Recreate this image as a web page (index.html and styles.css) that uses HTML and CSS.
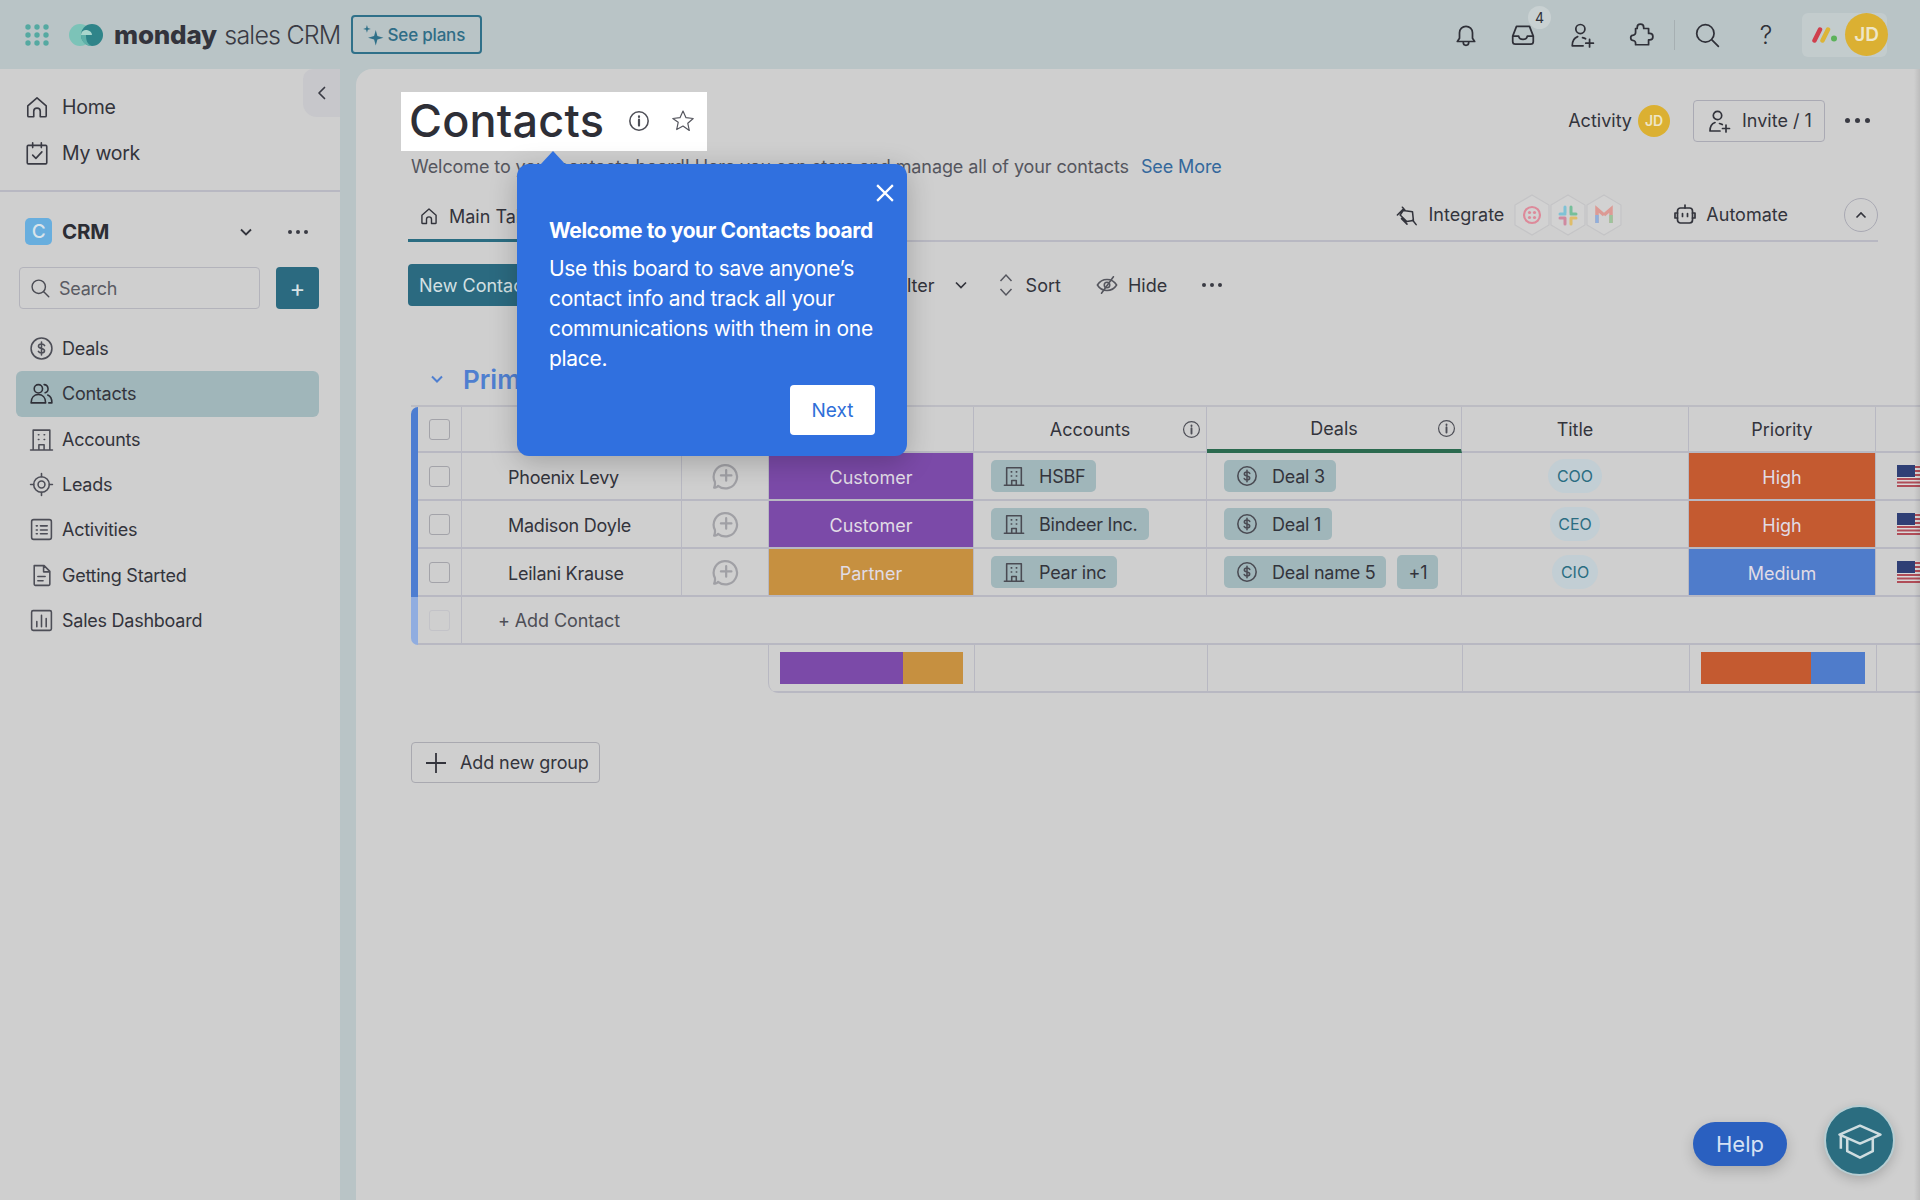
FILE: index.html
```html
<!DOCTYPE html>
<html lang="en">
<head>
<meta charset="utf-8">
<title>Contacts - monday sales CRM</title>
<link rel="stylesheet" href="styles.css">
</head>
<body>
<svg class="sprite" width="0" height="0" aria-hidden="true">
  <symbol id="i-home" viewBox="0 0 24 24"><path d="M3.500 11 12 3.500l8.500 7.500V20a1 1 0 0 1-1 1H15v-5a3 3 0 0 0-6 0v5H4.500a1 1 0 0 1-1-1z"/></symbol>
  <symbol id="i-cal" viewBox="0 0 24 24"><rect x="3" y="5" width="18" height="17" rx="1"/><path d="M8 2.500V7M16 2.500V7M8 14l3 3 5.500-6"/></symbol>
  <symbol id="i-deal" viewBox="0 0 24 24"><circle cx="12" cy="12" r="10"/><path d="M15 9.200c-.5-1-1.600-1.500-3-1.500-1.600 0-2.900.8-2.900 2.100s1.300 1.800 2.900 2.200 2.900.9 2.900 2.200-1.300 2.100-2.900 2.100c-1.400 0-2.500-.5-3-1.500M12 5.800v12.400"/></symbol>
  <symbol id="i-people" viewBox="0 0 24 24"><circle cx="9" cy="7.500" r="4"/><path d="M2 21c0-5 3-8 7-8s7 3 7 8z"/><path d="M14.500 3.500a4 4 0 0 1 1 7.800M18 13.500c2.500 1 4 3.500 4 7.500h-3"/></symbol>
  <symbol id="i-building" viewBox="0 0 24 24"><path d="M1.500 22h21M4 22V3h16v19M9.500 22v-5h5v5M9 7.500h.5M14.500 7.500h.5M9 12h.5M14.500 12h.5"/></symbol>
  <symbol id="i-target" viewBox="0 0 24 24"><circle cx="12" cy="12" r="7.500"/><circle cx="12" cy="12" r="3.300"/><path d="M12 1.500v3M12 19.500v3M1.500 12h3M19.500 12h3"/></symbol>
  <symbol id="i-list" viewBox="0 0 24 24"><rect x="2.500" y="2.500" width="19" height="19" rx="2"/><path d="M7 8.500h1M7 12.500h1M7 16h1M11 8.500h6.500M11 12.500h6.500M11 16h6.500"/></symbol>
  <symbol id="i-doc" viewBox="0 0 24 24"><path d="M5 2.500h9.500L20 8v12.500a1 1 0 0 1-1 1H6a1 1 0 0 1-1-1zM14 3v5.500h5.500M8.500 13h7M8.500 17h5"/></symbol>
  <symbol id="i-chart" viewBox="0 0 24 24"><rect x="2.500" y="2.500" width="19" height="19" rx="1.500"/><path d="M7.500 18v-5M12 18V7M16.500 18v-8"/></symbol>
  <symbol id="i-person" viewBox="0 0 24 24"><circle cx="10.500" cy="6.500" r="4.200"/><path d="M3 22c0-5 2-7.500 5-8.500M3 22h10M12.500 14.500c1 .2 2 .5 2.800 1M15.500 19.500h7M19 16v7"/></symbol>
  <symbol id="i-bell" viewBox="0 0 24 24"><path d="M4 18h16l-2-3v-5a6 6 0 0 0-12 0v5zM9.500 19a2.500 2.500 0 0 0 5 0"/></symbol>
  <symbol id="i-inbox" viewBox="0 0 24 24"><path d="M2.500 13 6 4h12l3.500 9v5a2.500 2.500 0 0 1-2.500 2.500H5A2.500 2.500 0 0 1 2.500 18zM2.500 13H8c.3 2 1.800 3 4 3s3.700-1 4-3h5.500"/></symbol>
  <symbol id="i-puzzle" viewBox="0 0 24 24"><path d="M8.500 6V5a3 3 0 0 1 6 0v1H19v4.500h1a3 3 0 0 1 0 6h-1V21H7v-1.500a2.500 2.500 0 0 0-2-2.400 2.500 2.500 0 0 1 0-5 2.500 2.500 0 0 0 2-2.400V6z"/></symbol>
  <symbol id="i-search" viewBox="0 0 24 24"><circle cx="10.500" cy="10.500" r="8"/><path d="m16.500 16.500 6 6"/></symbol>
  <symbol id="i-info" viewBox="0 0 24 24"><circle cx="12" cy="12" r="10"/><path d="M12 10.500V17M12 7v.5" stroke-width="2.400"/></symbol>
  <symbol id="i-star" viewBox="0 0 24 24"><path d="m12 2 3 6.700 7.200.8-5.400 4.800 1.500 7.200L12 17l-6.300 3.500 1.500-7.200L1.800 9.500 9 8.700z"/></symbol>
  <symbol id="i-plug" viewBox="0 0 24 24"><path d="m1.500 12 6-6M12 22 6 16M8 7l10 1.500 1 9.500-7.500 1-7-7zM7 3.500 10 7M18 17.500l4 5"/></symbol>
  <symbol id="i-robot" viewBox="0 0 24 24"><rect x="4.500" y="5" width="15" height="15" rx="3"/><path d="M12 5V2M4.500 10H2v5h2.500M19.500 10H22v5h-2.500M9.500 10.500v3M14.500 10.500v3"/></symbol>
  <symbol id="i-eye" viewBox="0 0 24 24"><path d="M1.500 12c2.500-4 6-6 10.500-6s8 2 10.500 6c-2.500 4-6 6-10.500 6s-8-2-10.500-6z"/><circle cx="12" cy="12" r="3"/><path d="M6 21 19 3"/></symbol>
  <symbol id="i-chat" viewBox="0 0 24 24"><path d="M3.500 22c1.200-.2 2-.8 2.500-1.600A10 10 0 1 0 3.300 17c.4 2-.1 3.800-.6 5z"/><path d="M13 7v9M8.500 11.500h9"/></symbol>
  <symbol id="i-cap" viewBox="0 0 36 28"><path d="M18 2 34 9 18 16 2 9zM8 12v10l10 5 10-5V12M3 9v11"/></symbol>
  <symbol id="i-flag" viewBox="0 0 24 22"><rect width="24" height="22" fill="#d8d8d8"/><path d="M0 14h24M0 17.500h24M0 21h24M18 2h6M18 6h6M18 10h6" stroke="#b04d58" stroke-width="1.800"/><rect width="18" height="12" fill="#2f3f75"/></symbol>
</svg>

<header class="topbar">
  <svg class="grid-icon" viewBox="0 0 24 22"><g fill="#55a9a1"><circle cx="3" cy="3" r="2.700"/><circle cx="12" cy="3" r="2.700"/><circle cx="21" cy="3" r="2.700"/><circle cx="3" cy="11" r="2.700"/><circle cx="12" cy="11" r="2.700"/><circle cx="21" cy="11" r="2.700"/><circle cx="3" cy="19" r="2.700"/><circle cx="12" cy="19" r="2.700"/><circle cx="21" cy="19" r="2.700"/></g></svg>
  <svg class="logo-mark" viewBox="0 0 34 22">
    <circle cx="11" cy="11" r="11" fill="#7cc3b8"/>
    <circle cx="23" cy="11" r="11" fill="#2f8489"/>
    <path d="M12 11a5 5 0 0 1 6-5c3 .5 5 2.500 5 5z" fill="#a9d6cd"/>
    <path d="M12 11c0 6 4 11 11 11-5-2-6-6-6-11z" fill="#5fb0a8"/>
  </svg>
  <div class="brand"><span class="brand-bold">monday</span> <span class="brand-light">sales CRM</span></div>
  <button class="see-plans">
    <svg class="spark" viewBox="0 0 20 20"><path d="M12.500 5.500 14 11l5.500 1.500L14 14l-1.500 5.500L11 14l-5.500-1.500L11 11zM4.500 1l.8 2.700L8 4.500l-2.700.8L4.500 8l-.8-2.700L1 4.500l2.700-.8z"/></svg>
    See plans
  </button>
  <div class="top-icons">
    <svg class="ic top-svg top-ic"><use href="#i-bell"/></svg>
    <div class="inbox-wrap">
      <svg class="ic top-svg"><use href="#i-inbox"/></svg>
      <span class="badge">4</span>
    </div>
    <svg class="ic top-svg top-ic"><use href="#i-person"/></svg>
    <svg class="ic top-svg top-ic"><use href="#i-puzzle"/></svg>
    <span class="top-divider"></span>
    <svg class="ic top-svg top-ic"><use href="#i-search"/></svg>
    <span class="help-q">?</span>
    <div class="account">
      <svg class="m-logo" viewBox="0 0 26 16"><g stroke-width="4.500" stroke-linecap="round"><path d="M2.500 13.500 8 2.500" stroke="#cf3f4d"/><path d="M10.500 13.500 16 2.500" stroke="#dcb437"/></g><circle cx="22" cy="11.500" r="3" fill="#5cb25a"/></svg>
      <span class="avatar avatar-lg">JD</span>
    </div>
  </div>
</header>

<div class="shell">
  <aside class="sidebar">
    <button class="collapse" aria-label="Collapse"><svg class="ic ic-14" viewBox="0 0 14 14"><path d="M9.500 1.500 4 7l5.500 5.500"/></svg></button>
    <nav class="top-nav">
      <a class="top-link"><svg class="ic"><use href="#i-home"/></svg>Home</a>
      <a class="top-link"><svg class="ic"><use href="#i-cal"/></svg>My work</a>
    </nav>
    <div class="ws-row">
      <span class="ws-icon">C</span>
      <span class="ws-name">CRM</span>
      <svg class="ws-chev" viewBox="0 0 14 14"><path d="m2 4.500 5 5 5-5"/></svg>
      <span class="dots dots-ws"><i></i><i></i><i></i></span>
    </div>
    <div class="search-row">
      <div class="search-box"><svg class="ic ic-18"><use href="#i-search"/></svg>Search</div>
      <button class="add-btn">+</button>
    </div>
    <nav class="board-nav">
      <a class="board-link"><svg class="ic"><use href="#i-deal"/></svg>Deals</a>
      <a class="board-link active"><svg class="ic"><use href="#i-people"/></svg>Contacts</a>
      <a class="board-link"><svg class="ic"><use href="#i-building"/></svg>Accounts</a>
      <a class="board-link"><svg class="ic"><use href="#i-target"/></svg>Leads</a>
      <a class="board-link"><svg class="ic"><use href="#i-list"/></svg>Activities</a>
      <a class="board-link"><svg class="ic"><use href="#i-doc"/></svg>Getting Started</a>
      <a class="board-link"><svg class="ic"><use href="#i-chart"/></svg>Sales Dashboard</a>
    </nav>
  </aside>

  <main class="main">
    <div class="board-head">
      <div class="title-box">
        <h1 class="title">Contacts</h1>
        <svg class="ic ic-20 title-info"><use href="#i-info"/></svg>
        <svg class="ic ic-22 title-star"><use href="#i-star"/></svg>
      </div>
      <div class="head-right">
        <span class="activity">Activity</span>
        <span class="avatar avatar-sm">JD</span>
        <button class="invite"><svg class="ic ic-24"><use href="#i-person"/></svg>Invite / 1</button>
        <span class="dots dots-head"><i></i><i></i><i></i></span>
      </div>
    </div>
    <p class="subtitle">Welcome to your contacts board! Here you can store and manage all of your contacts <a class="see-more">See More</a></p>

    <div class="tabs">
      <div class="tab-active"><svg class="ic ic-20"><use href="#i-home"/></svg>Main Table</div>
      <div class="tabs-right">
        <svg class="ic ic-22 integ-ic"><use href="#i-plug"/></svg>
        <span class="tab-label">Integrate</span>
        <svg class="hexes" viewBox="0 0 108 42">
          <g fill="#d2d2d2" stroke="#c4c4c6" stroke-width="1.200">
            <path d="M18 1 35 11v20L18 41 1 31V11z"/>
            <path d="M54 1 71 11v20L54 41 37 31V11z"/>
            <path d="M90 1l17 10v20L90 41 73 31V11z"/>
          </g>
          <circle cx="18" cy="21" r="8" fill="none" stroke="#dd8a9a" stroke-width="2.200"/>
          <g fill="#dd8a9a"><circle cx="15.500" cy="18.500" r="1.600"/><circle cx="20.500" cy="18.500" r="1.600"/><circle cx="15.500" cy="23.500" r="1.600"/><circle cx="20.500" cy="23.500" r="1.600"/></g>
          <g stroke-width="3" stroke-linecap="round"><path d="M51 13v6M46 20h5" stroke="#7fc2d6"/><path d="M57 13v6M57 20h5" stroke="#76bf9a"/><path d="M46 24h5M51 24v6" stroke="#cf8aa0"/><path d="M57 24h5M57 24v6" stroke="#dfbd6a"/></g>
          <path d="M83 29V15l7 6" fill="none" stroke="#dc9a94" stroke-width="3.500"/>
          <path d="M97 29V15l-7 6" fill="none" stroke="#dc9a94" stroke-width="3.500"/>
          <path d="M83 21v8" stroke="#8fb0dd" stroke-width="3.500"/>
          <path d="M97 21v8" stroke="#9cc49c" stroke-width="3.500"/>
        </svg>
        <svg class="ic ic-24 auto-ic"><use href="#i-robot"/></svg>
        <span class="tab-label">Automate</span>
        <span class="collapse-circle"><svg viewBox="0 0 14 14"><path d="m2.500 9.500 4.500-4.500 4.500 4.500"/></svg></span>
      </div>
    </div>

    <div class="toolbar">
      <button class="new-btn">New Contact</button>
      <span class="tool tool-filter">Filter<svg class="tool-chev" viewBox="0 0 14 14"><path d="m2 4.500 5 5 5-5"/></svg></span>
      <span class="tool tool-sort"><svg class="sort-ic" viewBox="0 0 14 24"><path d="M1.500 8 7 2l5.500 6M1.500 16 7 22l5.500-6"/></svg>Sort</span>
      <span class="tool tool-hide"><svg class="ic ic-22"><use href="#i-eye"/></svg>Hide</span>
      <span class="dots dots-tool"><i></i><i></i><i></i></span>
    </div>

    <div class="group-head">
      <svg class="group-chev" viewBox="0 0 14 14"><path d="m2 4.500 5 5 5-5"/></svg>
      <span class="group-name">Primary Contacts</span>
    </div>

    <div class="table">
      <div class="row row-head">
        <span class="bar bar-top"></span>
        <span class="cell cell-check"><i class="check"></i></span>
        <span class="cell">Contact</span>
        <span class="cell"></span>
        <span class="cell">Type</span>
        <span class="cell cell-hinted">Accounts<svg class="ic hint"><use href="#i-info"/></svg></span>
        <span class="cell cell-hinted cell-deals">Deals<svg class="ic hint"><use href="#i-info"/></svg></span>
        <span class="cell">Title</span>
        <span class="cell">Priority</span>
        <span class="cell cell-last"></span>
      </div>

      <div class="row">
        <span class="bar"></span>
        <span class="cell cell-check"><i class="check"></i></span>
        <span class="cell cell-name">Phoenix Levy</span>
        <span class="cell"><svg class="ic chat-ic"><use href="#i-chat"/></svg></span>
        <span class="cell status purple">Customer</span>
        <span class="cell cell-pills"><span class="pill"><svg class="ic ic-22"><use href="#i-building"/></svg>HSBF</span></span>
        <span class="cell cell-pills"><span class="pill"><svg class="ic ic-22"><use href="#i-deal"/></svg>Deal 3</span></span>
        <span class="cell"><span class="chip chip-wide">COO</span></span>
        <span class="cell status orange">High</span>
        <span class="cell cell-flag"><svg class="flag"><use href="#i-flag"/></svg></span>
      </div>

      <div class="row">
        <span class="bar"></span>
        <span class="cell cell-check"><i class="check"></i></span>
        <span class="cell cell-name">Madison Doyle</span>
        <span class="cell"><svg class="ic chat-ic"><use href="#i-chat"/></svg></span>
        <span class="cell status purple">Customer</span>
        <span class="cell cell-pills"><span class="pill"><svg class="ic ic-22"><use href="#i-building"/></svg>Bindeer Inc.</span></span>
        <span class="cell cell-pills"><span class="pill"><svg class="ic ic-22"><use href="#i-deal"/></svg>Deal 1</span></span>
        <span class="cell"><span class="chip">CEO</span></span>
        <span class="cell status orange">High</span>
        <span class="cell cell-flag"><svg class="flag"><use href="#i-flag"/></svg></span>
      </div>

      <div class="row">
        <span class="bar"></span>
        <span class="cell cell-check"><i class="check"></i></span>
        <span class="cell cell-name">Leilani Krause</span>
        <span class="cell"><svg class="ic chat-ic"><use href="#i-chat"/></svg></span>
        <span class="cell status amber">Partner</span>
        <span class="cell cell-pills"><span class="pill"><svg class="ic ic-22"><use href="#i-building"/></svg>Pear inc</span></span>
        <span class="cell cell-pills"><span class="pill"><svg class="ic ic-22"><use href="#i-deal"/></svg>Deal name 5</span><span class="pill pill-more">+1</span></span>
        <span class="cell"><span class="chip chip-narrow">CIO</span></span>
        <span class="cell status blue">Medium</span>
        <span class="cell cell-flag"><svg class="flag"><use href="#i-flag"/></svg></span>
      </div>

      <div class="row row-add">
        <span class="bar bar-bottom"></span>
        <span class="cell cell-check"><i class="check check-faded"></i></span>
        <span class="add-label">+ Add Contact</span>
      </div>

      <div class="summary">
        <span class="cell"><span class="sum-bar"><i class="seg purple seg-two"></i><i class="seg amber seg-one"></i></span></span>
        <span class="cell"></span>
        <span class="cell"></span>
        <span class="cell"></span>
        <span class="cell"><span class="sum-bar"><i class="seg orange seg-two"></i><i class="seg blue seg-one"></i></span></span>
        <span class="cell cell-last"></span>
      </div>
    </div>

    <button class="add-group"><svg class="plus-ic" viewBox="0 0 20 20"><path d="M10 0v20M0 10h20"/></svg>Add new group</button>
  </main>
</div>

<div class="popup">
  <span class="popup-arrow"></span>
  <svg class="popup-close" viewBox="0 0 16 16"><path d="m1 1 14 14M15 1 1 15"/></svg>
  <h2 class="popup-title">Welcome to your Contacts board</h2>
  <p class="popup-body">Use this board to save anyone’s contact info and track all your communications with them in one place.</p>
  <div class="popup-foot"><button class="next-btn">Next</button></div>
</div>

<button class="help-btn">Help</button>
<button class="learn-btn"><svg viewBox="0 0 36 28"><use href="#i-cap"/></svg></button>
<span class="edge-shade"></span>
</body>
</html>
```

FILE: styles.css
```css
* { box-sizing: border-box; }
html, body { margin: 0; height: 1200px; overflow: hidden; }
body {
  background: #b9c4c6;
  color: #33343c;
  font-family: Inter, "Noto Sans", "Liberation Sans", sans-serif;
  font-size: 18px;
  position: relative;
}
button { font: inherit; color: inherit; background: none; border: 0; padding: 0; }
.sprite { position: absolute; }
h1, h2, p { margin: 0; }

.ic { fill: none; stroke: currentColor; stroke-width: 1.700; stroke-linecap: round; stroke-linejoin: round; flex: none; }
.ic-14 { width: 14px; height: 14px; }
.ic-18 { width: 18px; height: 18px; }
.ic-20 { width: 20px; height: 20px; }
.ic-22 { width: 22px; height: 22px; }
.ic-24 { width: 24px; height: 24px; }

.dots { display: inline-flex; gap: 4px; align-items: center; }
.dots i { width: 4px; height: 4px; border-radius: 50%; background: #3a3b44; }

/* top bar */
.topbar { height: 69px; display: flex; align-items: center; padding-left: 25px; }
.grid-icon { width: 24px; height: 22px; flex: none; }
.logo-mark { width: 34px; height: 22px; margin-left: 20px; flex: none; }
.brand { margin-left: 11px; font-size: 26px; white-space: nowrap; }
.brand-bold { font-weight: 800; color: #33343c; letter-spacing: -0.2px; }
.brand-light { font-weight: 300; color: #3a3b44; font-size: 25px; letter-spacing: -0.8px; }
.see-plans {
  margin-left: 10px; width: 131px; height: 39px; border: 2px solid #2f7089; border-radius: 4px;
  display: flex; align-items: center; gap: 4px; padding-left: 9px;
  color: #2f6d86; font-size: 17px; font-weight: 500; white-space: nowrap; letter-spacing: -0.2px;
}
.spark { width: 22px; height: 22px; fill: #2f7089; flex: none; }
.top-icons { margin-left: auto; display: flex; align-items: center; height: 100%; padding-right: 33px; color: #2f3038; }
.top-svg { width: 26px; height: 26px; stroke-width: 1.600; }
.top-ic { margin-left: 33px; }
.inbox-wrap { position: relative; margin-left: 31px; display: flex; }
.badge {
  position: absolute; left: 18px; top: -16px; width: 23px; height: 23px; border-radius: 50%;
  background: #c9d1d2; font-size: 14px; display: flex; align-items: center; justify-content: center;
}
.top-divider { width: 1px; height: 30px; background: #a6afb2; margin-left: 20px; margin-right: -14px; }
.help-q { width: 24px; text-align: center; margin-left: 34px; font-size: 25px; font-weight: 300; }
.account {
  margin-left: 24px; width: 85px; height: 44px; background: #c3cccd; border-radius: 6px;
  display: flex; align-items: center; padding-left: 10px;
}
.m-logo { width: 26px; height: 16px; fill: none; flex: none; }
.avatar { display: flex; align-items: center; justify-content: center; border-radius: 50%; background: #dbb032; color: #eee6c8; font-weight: 600; flex: none; }
.avatar-lg { width: 43px; height: 43px; margin-left: 7px; font-size: 19px; }
.avatar-sm { width: 32px; height: 32px; font-size: 14px; }

/* layout */
.shell { display: flex; gap: 16px; height: 1131px; }

/* sidebar */
.sidebar { width: 340px; flex: none; background: #cfcfcf; position: relative; padding-top: 15px; letter-spacing: -0.25px; }
.collapse {
  position: absolute; right: 0; top: 0; width: 37px; height: 48px;
  background: #c7c7cb; border-radius: 10px 0 0 14px;
  display: flex; align-items: center; justify-content: center; color: #3a3b44;
}
.top-nav { border-bottom: 2px solid #b8b8c2; padding-bottom: 14px; }
.top-link { display: flex; align-items: center; gap: 12px; height: 46px; padding-left: 24px; font-size: 19.500px; }
.top-link .ic { width: 26px; height: 26px; stroke-width: 1.500; color: #3a3b44; }
.ws-row { display: flex; align-items: center; margin-top: 26px; padding-left: 25px; height: 27px; }
.ws-icon {
  width: 27px; height: 27px; border-radius: 5px; background: #68aede; color: #d9e4ea;
  display: flex; align-items: center; justify-content: center; font-size: 19px; font-weight: 500;
}
.ws-name { margin-left: 10px; font-size: 20.500px; font-weight: 700; width: 177px; color: #2c2d34; }
.ws-chev { width: 14px; height: 14px; fill: none; stroke: #33343c; stroke-width: 1.800; }
.dots-ws { margin-left: 35px; }
.search-row { display: flex; align-items: center; gap: 16px; margin-top: 22px; padding-left: 19px; }
.search-box {
  width: 241px; height: 42px; border: 1.500px solid #b3b3bb; border-radius: 4px;
  display: flex; align-items: center; gap: 9px; padding-left: 10px; font-size: 18px; color: #5a5b63;
}
.search-box .ic { width: 20px; height: 20px; color: #4a4b53; }
.add-btn { width: 43px; height: 42px; border-radius: 4px; background: #2b6a80; color: #d6e2e5; font-size: 24px; font-weight: 400; }
.board-nav { margin-top: 17px; padding: 0 21px 0 16px; }
.board-link { display: flex; align-items: center; gap: 8px; height: 45.300px; padding-left: 13px; font-size: 18px; border-radius: 6px; }
.board-link .ic { color: #4d4e57; width: 25px; height: 25px; stroke-width: 1.500; }
.board-link.active { background: #a0b6ba; }
.board-link.active .ic { color: #2f3038; }

/* main */
.main {
  flex: 1; min-width: 0; background: #cfcfcf; border-top-left-radius: 16px;
  padding: 23px 42px 0 52px; overflow: hidden; position: relative;
}
.board-head { display: flex; align-items: center; justify-content: space-between; }
.title-box {
  margin-left: -7px; width: 306px; height: 59px; background: #fff;
  display: flex; align-items: center; padding: 0 0 2px 8px;
}
.title { font-size: 45px; font-weight: 500; letter-spacing: 0.2px; color: #2e2f37; width: 219px; white-space: nowrap; }
.title-info { color: #4e4f57; width: 22px; height: 22px; }
.title-star { margin-left: 21px; width: 24px; height: 24px; color: #55565e; stroke-width: 1.200; }
.head-right { display: flex; align-items: center; margin-right: 8px; padding-bottom: 2px; }
.activity { font-size: 18px; margin-right: 6px; }
.invite {
  margin-left: 23px; width: 132px; height: 42px; border: 1.500px solid #aaaab4; border-radius: 4px;
  display: flex; align-items: center; gap: 11px; padding-left: 13px; font-size: 18px; white-space: nowrap;
}
.dots-head { margin-left: 20px; gap: 5px; }
.dots-head i { width: 5px; height: 5px; }
.subtitle { margin-top: 4px; padding-left: 3px; height: 24px; line-height: 24px; font-size: 18px; color: #55565e; white-space: nowrap; letter-spacing: -0.1px; }
.see-more { color: #34689c; margin-left: 7px; }

.tabs { margin-top: 14px; height: 49px; border-bottom: 2px solid #b8b8c2; display: flex; justify-content: space-between; align-items: stretch; }
.tab-active {
  display: flex; align-items: center; gap: 10px; padding-left: 11px; width: 260px; height: 49px;
  border-bottom: 3px solid #2b6d82; font-size: 18px;
}
.tabs-right { display: flex; align-items: center; padding-bottom: 4px; }
.tab-label { font-size: 18px; }
.integ-ic { margin-right: 11px; margin-left: -2px; }
.hexes { width: 108px; height: 42px; margin: 0 51px 0 10px; }
.auto-ic { margin-right: 9px; }
.collapse-circle {
  width: 34px; height: 34px; margin-left: 56px; border-radius: 50%; border: 1.500px solid #a9a9b3;
  display: flex; align-items: center; justify-content: center;
}
.collapse-circle svg { width: 14px; height: 14px; fill: none; stroke: #33343c; stroke-width: 1.600; }

.toolbar { margin-top: 22px; height: 42px; display: flex; align-items: center; font-size: 18px; }
.new-btn { width: 130px; height: 42px; background: #2b6a80; border-radius: 4px; color: #d3e0e3; text-align: left; padding-left: 11px; white-space: nowrap; }
.tool { display: inline-flex; align-items: center; white-space: nowrap; }
.tool-filter { margin-left: 354px; }
.tool-chev { width: 14px; height: 14px; margin-left: 19px; fill: none; stroke: #33343c; stroke-width: 1.700; }
.tool-sort { margin-left: 31px; gap: 13px; }
.sort-ic { width: 14px; height: 24px; fill: none; stroke: #55565e; stroke-width: 1.500; }
.tool-hide { margin-left: 35px; gap: 10px; }
.tool-hide .ic { color: #55565e; }
.dots-tool { margin-left: 35px; }

.group-head { margin-top: 55px; height: 36px; display: flex; align-items: center; padding-left: 22px; }
.group-chev { width: 14px; height: 14px; fill: none; stroke: #4f7fd0; stroke-width: 2; }
.group-name { margin-left: 19px; color: #4f7fd0; font-size: 26px; font-weight: 600; white-space: nowrap; }

/* table */
.table { margin: 8px -42px 0 3px; border-top: 2px solid #bcbcc3; }
.row, .row-head {
  display: grid;
  grid-template-columns: 7px 44px 220px 87px 205px 233px 255px 227px 187px 1fr;
  height: 48px;
}
.row-head { height: 46px; font-size: 18px; }
.cell {
  border-right: 1.500px solid #b8b8c2; border-bottom: 2px solid #b8b8c2;
  display: flex; align-items: center; justify-content: center; min-width: 0; white-space: nowrap; position: relative;
}
.cell-last { border-right: 0; }
.row > .cell:last-child { border-right: 0; }
.bar { background: #4d7dd1; }
.bar-top { border-top-left-radius: 8px; }
.bar-bottom { background: #90ade0; border-bottom-left-radius: 8px; }
.check { width: 21px; height: 21px; border: 1.500px solid #a3a3a9; border-radius: 3px; display: block; }
.check-faded { border-color: #c3c3c8; }
.cell-name { justify-content: flex-start; padding: 2px 0 0 46px; letter-spacing: -0.25px; }
.chat-ic { width: 28px; height: 28px; color: #a0a0a5; stroke-width: 1.900; }
.status { color: #e1dce6; font-size: 18px; padding-top: 2px; }
.purple { background: #7b4aa8; }
.amber { background: #c69040; }
.orange { background: #c45a30; }
.blue { background: #4f7ccb; }
.cell-hinted .hint { position: absolute; right: 5px; width: 19px; height: 19px; color: #4e4f57; stroke-width: 1.500; }
.cell-deals { border-bottom: 4px solid #2b6a4f; }
.cell-pills { justify-content: flex-start; padding-left: 17px; gap: 11px; }
.pill {
  height: 32px; background: #a0b6ba; border-radius: 5px; padding: 0 11px 0 12px;
  display: flex; align-items: center; gap: 14px; font-size: 18px; color: #33343c; letter-spacing: -0.25px;
}
.pill .ic { color: #4a4b53; }
.pill-more { padding: 0 9px; height: 34px; width: 41px; justify-content: center; }
.chip {
  width: 50px; height: 34px; border-radius: 17px; background: #c2ced4; color: #2b6d82; font-size: 16px;
  display: flex; align-items: center; justify-content: center;
}
.chip-wide { width: 54px; }
.chip-narrow { width: 46px; }
.cell-flag { justify-content: flex-start; padding-left: 21px; overflow: hidden; }
.flag { width: 24px; height: 22px; flex: none; }
.row-add { grid-template-columns: 7px 44px 1fr; }
.row-add .cell-check { border-right: 1.500px solid #b8b8c2; }
.add-label { border-bottom: 2px solid #b8b8c2; display: flex; align-items: center; padding-left: 36px; color: #4d4e56; font-size: 18px; letter-spacing: -0.1px; }
.summary {
  margin-left: 357px; height: 48px; display: grid;
  grid-template-columns: 206px 233px 255px 227px 187px 1fr;
  border-left: 1.500px solid #b8b8c2; border-bottom-left-radius: 10px; overflow: hidden;
}
.sum-bar { width: calc(100% - 22px); height: 32px; display: flex; }
.seg { display: block; height: 100%; }
.seg-two { width: 67%; }
.seg-one { width: 33%; }

.add-group {
  margin: 49px 0 0 3px; width: 189px; height: 41px; border: 1.500px solid #a9a9b0; border-radius: 4px;
  display: flex; align-items: center; gap: 14px; padding-left: 14px; font-size: 18px; white-space: nowrap; letter-spacing: -0.1px;
}
.plus-ic { width: 20px; height: 20px; fill: none; stroke: #33343c; stroke-width: 1.800; flex: none; }

/* popup */
.popup {
  position: absolute; left: 517px; top: 164px; width: 390px; height: 292px;
  background: #3070df; border-radius: 12px; color: #fff; padding: 54px 32px 0;
  box-shadow: 0 6px 28px rgba(0, 0, 0, .22);
}
.popup-arrow {
  position: absolute; left: 23px; top: -13px; width: 0; height: 0;
  border-left: 13px solid transparent; border-right: 13px solid transparent; border-bottom: 14px solid #3070df;
}
.popup-close { position: absolute; right: 13px; top: 20px; width: 18px; height: 18px; fill: none; stroke: #fff; stroke-width: 2; }
.popup-title { font-size: 21px; font-weight: 700; line-height: 26px; white-space: nowrap; letter-spacing: -0.4px; }
.popup-body { margin-top: 10px; font-size: 21px; line-height: 30px; letter-spacing: -0.3px; width: 332px; font-weight: 400; }
.popup-foot { display: flex; justify-content: flex-end; margin-top: 11px; }
.next-btn { width: 85px; height: 50px; background: #fff; border-radius: 4px; color: #2f6fd8; font-size: 19px; }

/* floating */
.help-btn { position: absolute; left: 1693px; top: 1122px; width: 94px; height: 44px; border-radius: 22px; background: #2a60c0; color: #d6e2f4; font-size: 22px; box-shadow: 0 5px 14px rgba(0,0,0,.18); }
.learn-btn { position: absolute; left: 1824px; top: 1105px; width: 71px; height: 71px; border-radius: 50%; background: #2b6d80; border: 2px solid #b7cdd2; display: flex; align-items: center; justify-content: center; box-shadow: 0 4px 12px rgba(0,0,0,.18); }
.learn-btn svg { width: 46px; height: 36px; fill: none; stroke: #cfdde0; stroke-width: 2; stroke-linejoin: round; }
.edge-shade { position: absolute; right: 0; top: 69px; width: 6px; height: 1131px; background: linear-gradient(90deg, rgba(0,0,0,0), rgba(0,0,0,.09)); }
```
